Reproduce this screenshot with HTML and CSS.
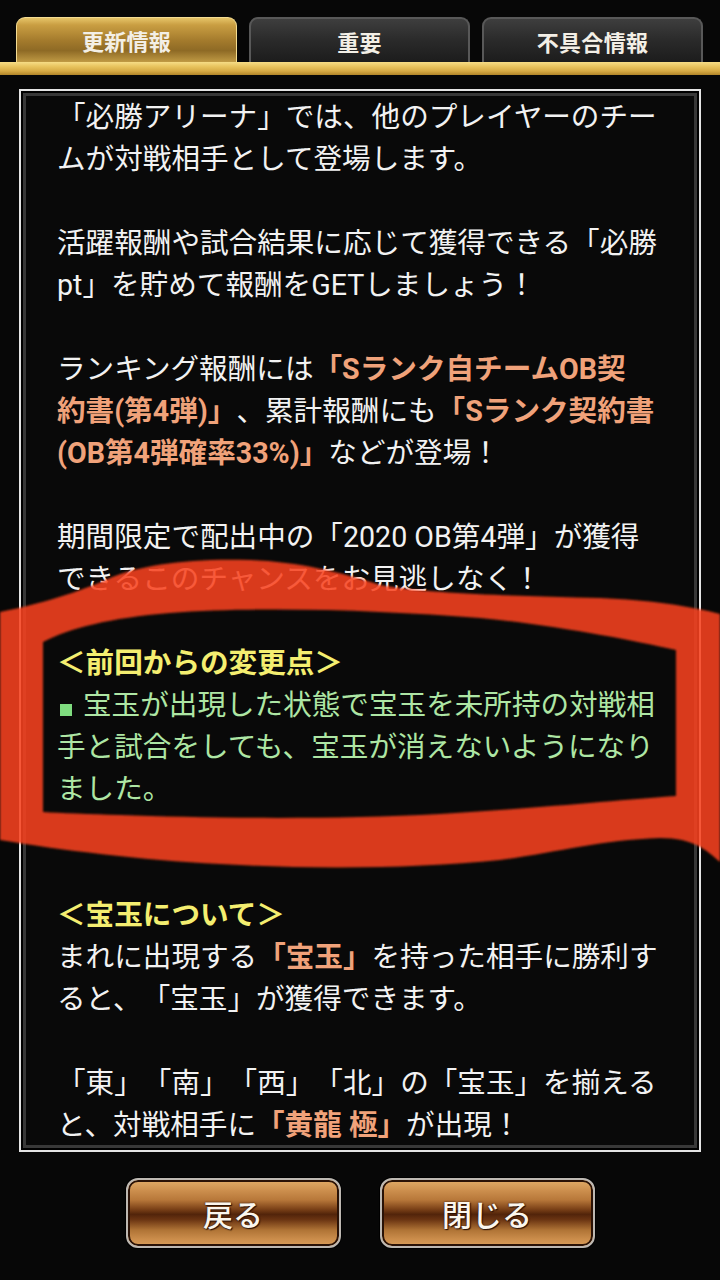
FILE: index.html
```html
<!DOCTYPE html>
<html lang="ja">
<head>
<meta charset="utf-8">
<title>お知らせ</title>
<link rel="stylesheet" href="styles.css">
</head>
<body>
<div class="screen">
  <nav class="tabs">
    <div class="tab tab-active">更新情報</div>
    <div class="tab">重要</div>
    <div class="tab">不具合情報</div>
  </nav>
  <div class="gold-bar"></div>

  <section class="panel">
    <div class="panel-inner">
      <div class="scroll">
        <p>「必勝アリーナ」では、他のプレイヤーのチー<br>ムが対戦相手として登場します。</p>
        <p>活躍報酬や試合結果に応じて獲得できる「必勝<br>pt」を貯めて報酬をGETしましょう！</p>
        <p>ランキング報酬には<b class="hl">「Sランク自チームOB契<br>約書(第4弾)」</b>、累計報酬にも<b class="hl">「Sランク契約書<br>(OB第4弾確率33%)」</b>などが登場！</p>
        <p>期間限定で配出中の「2020 OB第4弾」が獲得<br>できるこのチャンスをお見逃しなく！</p>
        <p class="gap2"><span class="head">＜前回からの変更点＞</span><br><span class="green"><i class="sq"></i>宝玉が出現した状態で宝玉を未所持の対戦相<br>手と試合をしても、宝玉が消えないようになり<br>ました。</span></p>
        <p><span class="head">＜宝玉について＞</span><br>まれに出現する<b class="hl">「宝玉」</b>を持った相手に勝利す<br>ると、「宝玉」が獲得できます。</p>
        <p>「東」「南」「西」「北」の「宝玉」を揃える<br>と、対戦相手に<b class="hl">「黄龍 極」</b>が出現！</p>
      </div>
    </div>
  </section>

  <div class="actions">
    <button class="btn" type="button">戻る</button>
    <button class="btn" type="button">閉じる</button>
  </div>

  <svg class="marker" width="720" height="1280" viewBox="0 0 720 1280" aria-hidden="true">
    <defs>
      <filter id="soft" x="-5%" y="-5%" width="110%" height="110%">
        <feGaussianBlur stdDeviation="1.3"/>
      </filter>
    </defs>
    <path filter="url(#soft)" fill="#f8421f" fill-opacity="0.87" fill-rule="evenodd"
      d="M0,612 C30,606 70,596 110,578 C140,565 190,558 250,560 C300,562 340,572 380,585 C430,594 520,596 600,598 C650,600 690,606 720,614 L720,862 C706,850 694,838 660,838 C600,840 560,852 500,860 C420,868 320,870 220,864 C140,860 60,850 0,840 Z
         M43,642 C70,628 110,618 170,613 C260,606 380,610 480,618 C560,626 630,640 676,650 L676,796 C620,800 540,808 440,814 C330,820 200,818 120,815 C90,814 60,813 43,812 Z"/>
  </svg>
</div>
</body>
</html>
```

FILE: styles.css
```css
* {
  box-sizing: border-box;
}

html,
body {
  margin: 0;
  padding: 0;
}

body {
  background: #070707;
  font-family: Roboto, "Noto Sans CJK JP", sans-serif;
  color: #f2f2f2;
  text-spacing-trim: space-all;
}

.screen {
  position: relative;
  width: 720px;
  height: 1280px;
  overflow: hidden;
  background: #070707;
}

/* ---------- tabs ---------- */
.tabs {
  display: flex;
  gap: 12px;
  padding: 17px 16px 0;
  height: 62px;
}

.tab {
  width: 221px;
  height: 45px;
  padding-top: 0;
  border: 2px solid #585858;
  border-bottom: none;
  border-radius: 9px 9px 0 0;
  background: linear-gradient(#3e3e3e 0%, #2a2a2a 50%, #1c1c1c 100%);
  display: flex;
  align-items: center;
  justify-content: center;
  font-family: "Noto Sans CJK JP", sans-serif;
  font-size: 22px;
  font-weight: 700;
  color: #f3efe6;
  letter-spacing: 0.3px;
}

.tab-active {
  border: 1px solid #f4dc92;
  border-bottom: none;
  background: linear-gradient(#e6c468 0%, #c99e42 16%, #a37a2c 52%, #8e6a25 74%, #c09a44 100%);
}

.gold-bar {
  height: 13px;
  background: linear-gradient(#f6dc86 0%, #e8c35e 35%, #d6aa44 70%, #b08428 100%);
}

/* ---------- panel ---------- */
.panel {
  width: 682px;
  margin: 14px 0 0 19px;
  border: 2px solid #e4e4e4;
  padding: 2px;
  background: #000;
}

.panel-inner {
  border: 3px solid #383838;
  background: #090909;
}

.scroll {
  height: 1049px;
  overflow: hidden;
  padding: 0 0 0 31px;
  font-size: 28.6px;
  line-height: 42px;
  white-space: nowrap;
  text-spacing-trim: space-all;
}

.scroll p {
  margin: 0 0 42px;
}

.scroll p.gap2 {
  margin-bottom: 84px;
}

.hl {
  color: #f0a27a;
  font-weight: 700;
}

.head {
  color: #f4ee70;
  font-weight: 700;
}

.green {
  color: #aee6a4;
}

.sq {
  display: inline-block;
  width: 12px;
  height: 12px;
  margin: 0 11px 0 3px;
  background: #7fdc7f;
  vertical-align: -1px;
}

/* ---------- buttons ---------- */
.actions {
  display: flex;
  justify-content: center;
  gap: 39px;
  margin-top: 26px;
}

.btn {
  width: 215px;
  height: 70px;
  padding: 0;
  border: 2px solid #bdb8b2;
  border-radius: 12px;
  box-shadow: inset 0 0 0 2px #2a1206, 0 0 0 1px #000;
  background: linear-gradient(#e2ac68 0%, #cf9250 14%, #b8783a 30%, #7c4218 44%, #52240a 52%, #6a3412 60%, #b07436 76%, #cc8e4c 90%, #d99c58 100%);
  display: flex;
  align-items: center;
  justify-content: center;
  font-family: "Noto Sans CJK JP", sans-serif;
  font-size: 30px;
  font-weight: 500;
  color: #fbf6ee;
  text-shadow: 0 0 2px #2a1004, 1px 1px 1px #2a1004;
}

/* ---------- marker annotation ---------- */
.marker {
  position: absolute;
  top: 0;
  left: 0;
  pointer-events: none;
}
```
